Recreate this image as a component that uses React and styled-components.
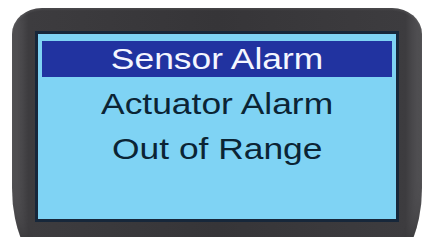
import React from 'react'
import styled, { createGlobalStyle } from 'styled-components'

const GlobalStyle = createGlobalStyle`
  html, body {
    margin: 0;
    padding: 0;
    background: #ffffff;
    overflow: hidden;
  }
`

const Page = styled.div`
  width: 423px;
  height: 237px;
  overflow: hidden;
  padding: 8px 1px 0 12px;
  box-sizing: border-box;
`

const Bezel = styled.div`
  height: 260px;
  box-sizing: border-box;
  padding: 23px 23px 0 23px;
  background: linear-gradient(
    90deg,
    #5a595c 0%,
    #3d3c3f 4%,
    #363538 50%,
    #3d3c3f 96%,
    #5a595c 100%
  );
  border-radius: 30px 30px 40px 40px / 26px 26px 80px 80px;
  box-shadow: inset 0 2px 2px rgba(255, 255, 255, 0.08),
    inset 0 -6px 8px rgba(0, 0, 0, 0.25);
`

const Screen = styled.div`
  height: 191px;
  box-sizing: border-box;
  border: 3px solid #17273a;
  background: #7fd3f4;
  padding: 7px 4px 0 4px;
  display: flex;
  flex-direction: column;
  gap: 9px;
`

const Row = styled.div`
  height: 36px;
  display: flex;
  align-items: center;
  justify-content: center;
  background: ${props => (props.$selected ? '#2133a0' : 'transparent')};
  color: ${props => (props.$selected ? '#f4f6ff' : '#0b2434')};
  font-family: 'Liberation Sans', Arial, sans-serif;
  font-size: 29px;
  line-height: 36px;
`

const Label = styled.span`
  display: inline-block;
  white-space: nowrap;
  transform: scaleX(1.22);
`

const items = ['Sensor Alarm', 'Actuator Alarm', 'Out of Range']

export default function App() {
  return (
    <>
      <GlobalStyle />
      <Page>
        <Bezel>
          <Screen>
            {items.map((item, index) => (
              <Row key={item} $selected={index === 0}>
                <Label>{item}</Label>
              </Row>
            ))}
          </Screen>
        </Bezel>
      </Page>
    </>
  )
}
